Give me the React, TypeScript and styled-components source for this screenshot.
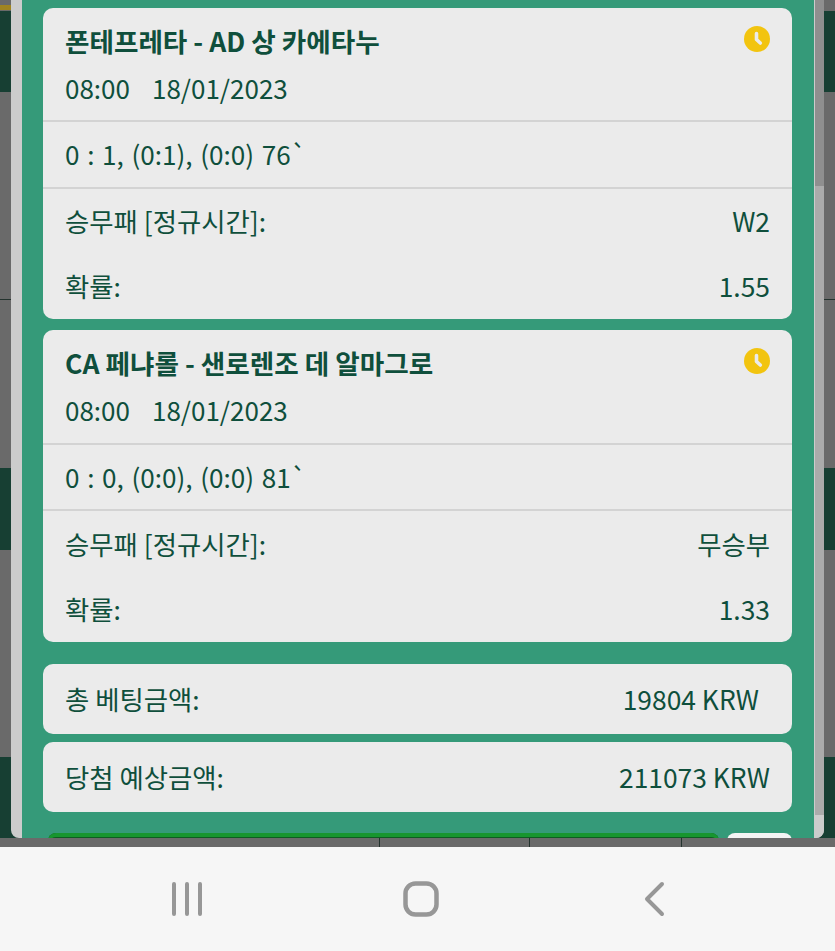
import React from 'react';
import styled, { createGlobalStyle } from 'styled-components';

const GlobalStyle = createGlobalStyle`
    html, body {
        margin: 0;
        padding: 0;
        width: 835px;
        height: 951px;
        overflow: hidden;
        background: #f6f6f6;
    }
    * {
        box-sizing: border-box;
    }
`;

const Page = styled.div`
    width: 835px;
    height: 951px;
    display: flex;
    flex-direction: column;
    font-family: 'Noto Sans CJK KR', 'Noto Sans', sans-serif;
    color: #0f4f3c;
`;

const Screen = styled.div`
    position: relative;
    height: 847px;
    overflow: hidden;
    background: #6a6a6a;
`;

const Band = styled.div<{ $height: number; $bg?: string }>`
    height: ${(props) => props.$height}px;
    background: ${(props) => props.$bg || 'transparent'};
`;

const TopAccent = styled.div`
    height: 11px;
    display: flex;
    padding-top: 5px;
    span {
        display: block;
        width: 11px;
        height: 5px;
        background: #a08420;
    }
`;

const TickRow = styled.div`
    height: 9px;
    display: grid;
    grid-template-columns: 379px 150px 152px 1fr;
    div + div {
        border-left: 1px solid #24332e;
    }
`;

const Modal = styled.div`
    position: absolute;
    top: 0;
    left: 11px;
    width: 813px;
    height: 838px;
    display: flex;
    overflow: hidden;
    border-radius: 0 0 8px 8px;
    background: #cccccc;
`;

const Panel = styled.div`
    margin-left: 11px;
    width: 792px;
    height: 838px;
    padding: 8px 22px 0 21px;
    background: #359a79;
    overflow: hidden;
`;

const ScrollTrack = styled.div`
    width: 9px;
    display: flex;
    flex-direction: column;
    margin-left: 1px;
`;

const ScrollPart = styled.div<{ $height: number; $bg: string }>`
    height: ${(props) => props.$height}px;
    background: ${(props) => props.$bg};
`;

const Card = styled.section`
    background: #ebebeb;
    border-radius: 10px;
    margin-bottom: 11px;
    overflow: hidden;
`;

const CardHead = styled.header`
    position: relative;
    height: 114.3px;
    padding: 13px 22px 0;
    border-bottom: 2px solid #d3d3d3;
`;

const Title = styled.h3`
    margin: 0;
    font-size: 26.6px;
    line-height: 40px;
    font-weight: 700;
`;

const DateLine = styled.div`
    display: flex;
    gap: 22px;
    margin-top: 7px;
    font-size: 26px;
    line-height: 40px;
`;

const ClockIcon = styled.svg`
    position: absolute;
    top: 18px;
    right: 22px;
    width: 26px;
    height: 26px;
`;

const ScoreLine = styled.div`
    height: 66.5px;
    padding: 0 22px 1px;
    display: flex;
    align-items: center;
    font-size: 26.1px;
    word-spacing: 1.8px;
    border-bottom: 2px solid #d3d3d3;
`;

const Rows = styled.div`
    height: 130.7px;
    padding: 0 22px;
    display: grid;
    grid-template-rows: 64px 66px;
`;

const Row = styled.div`
    display: flex;
    align-items: center;
    justify-content: space-between;
    font-size: 26.4px;
`;

const SummaryRow = styled.div<{ $inset?: number }>`
    height: 70px;
    margin-bottom: 8px;
    padding: 0 ${(props) => 22 + (props.$inset ?? 0)}px 0 22px;
    display: flex;
    align-items: center;
    justify-content: space-between;
    background: #ebebeb;
    border-radius: 10px;
    font-size: 26.4px;
`;

const Spacer = styled.div`
    height: 11px;
`;

const ButtonRow = styled.div`
    margin-top: 21px;
    display: flex;
    gap: 8px;
    padding-left: 5px;
`;

const PrimaryButton = styled.div`
    flex: 1;
    height: 40px;
    background: #0d5c22;
    border-radius: 8px 8px 0 0;
    box-shadow: inset 0 4px 0 #17962f;
`;

const SecondaryButton = styled.div`
    width: 65px;
    height: 40px;
    background: #f4f4f4;
    border-radius: 8px 8px 0 0;
`;

const NavBar = styled.nav`
    height: 104px;
    padding: 0 169px 0 170px;
    display: flex;
    align-items: center;
    justify-content: space-between;
    background: #f6f6f6;
`;

const NavIcon = styled.svg`
    display: block;
    fill: none;
    stroke: #979797;
    stroke-linecap: round;
    stroke-linejoin: round;
`;

interface IMatch {
    title: string;
    score: string;
    outcome: string;
    odds: string;
}

const matches: IMatch[] = [
    { title: '폰테프레타 - AD 상 카에타누', score: '0 : 1, (0:1), (0:0) 76`', outcome: 'W2', odds: '1.55' },
    { title: 'CA 페냐롤 - 샌로렌조 데 알마그로', score: '0 : 0, (0:0), (0:0) 81`', outcome: '무승부', odds: '1.33' },
];

function MatchCard({ match }: { match: IMatch }) {
    return (
        <Card>
            <CardHead>
                <Title>{match.title}</Title>
                <DateLine>
                    <span>08:00</span>
                    <span>18/01/2023</span>
                </DateLine>
                <ClockIcon viewBox="0 0 26 26">
                    <circle cx="13" cy="13" r="13" fill="#f2c40f" />
                    <path d="M12.5 7.5v6l3.8 3.5" fill="none" stroke="#ebebeb" strokeWidth="3.6" strokeLinecap="round" strokeLinejoin="round" />
                </ClockIcon>
            </CardHead>
            <ScoreLine>{match.score}</ScoreLine>
            <Rows>
                <Row>
                    <span>승무패 [정규시간]:</span>
                    <span>{match.outcome}</span>
                </Row>
                <Row>
                    <span>확률:</span>
                    <span>{match.odds}</span>
                </Row>
            </Rows>
        </Card>
    );
}

function App() {
    return (
        <Page>
            <GlobalStyle />
            <Screen>
                <TopAccent>
                    <span />
                </TopAccent>
                <Band $height={81} $bg="#173f33" />
                <Band $height={207} />
                <Band $height={1} $bg="#24332e" />
                <Band $height={168} />
                <Band $height={82} $bg="#173f33" />
                <Band $height={207} />
                <Band $height={81} $bg="#173f33" />
                <TickRow>
                    <div />
                    <div />
                    <div />
                    <div />
                </TickRow>
                <Modal>
                    <Panel>
                        {matches.map((match) => (
                            <MatchCard key={match.title} match={match} />
                        ))}
                        <Spacer />
                        <SummaryRow $inset={11}>
                            <span>총 베팅금액:</span>
                            <span>19804 KRW</span>
                        </SummaryRow>
                        <SummaryRow>
                            <span>당첨 예상금액:</span>
                            <span>211073 KRW</span>
                        </SummaryRow>
                        <ButtonRow>
                            <PrimaryButton />
                            <SecondaryButton />
                        </ButtonRow>
                    </Panel>
                    <ScrollTrack>
                        <ScrollPart $height={186} $bg="#8f8f8f" />
                        <ScrollPart $height={629} $bg="#ababab" />
                        <ScrollPart $height={23} $bg="#cccccc" />
                    </ScrollTrack>
                </Modal>
            </Screen>
            <NavBar>
                <NavIcon width="34" height="36" viewBox="0 0 34 36" strokeWidth="4">
                    <path d="M4 3v30M17 3v30M30 3v30" />
                </NavIcon>
                <NavIcon width="36" height="36" viewBox="0 0 36 36" strokeWidth="4.5">
                    <rect x="2.5" y="2.5" width="31" height="31" rx="10" />
                </NavIcon>
                <NavIcon width="28" height="36" viewBox="0 0 28 36" strokeWidth="4">
                    <path d="M24 3L9 18l15 15" />
                </NavIcon>
            </NavBar>
        </Page>
    );
}

export default App;
